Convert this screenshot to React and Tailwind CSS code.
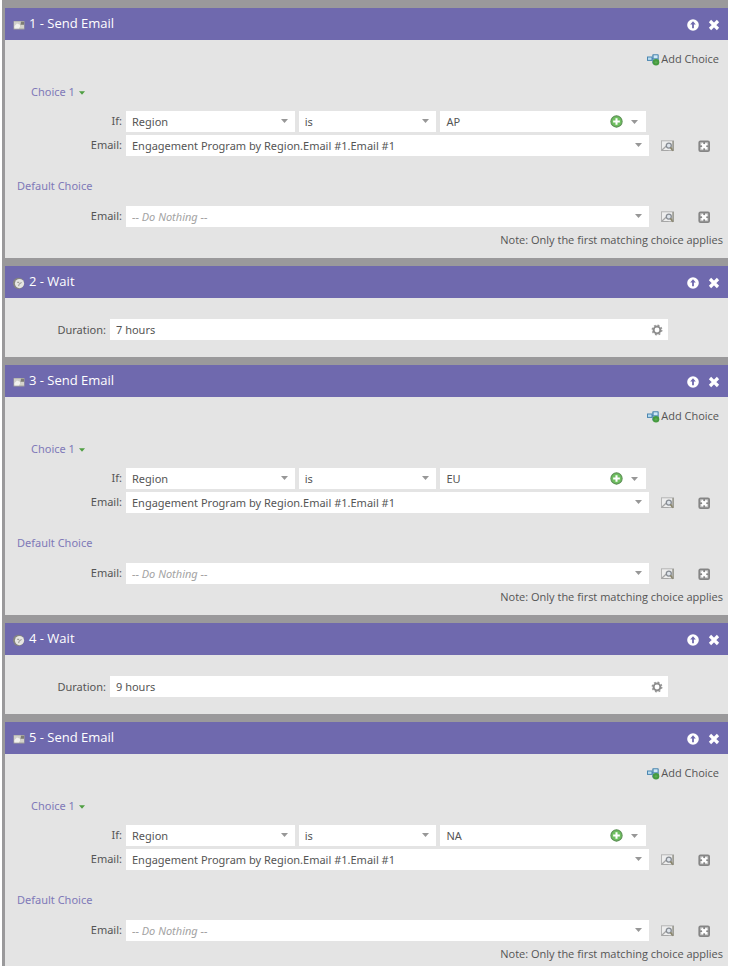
import React, { useId, useState } from "react";

const flow = [
  { type: "email", title: "1 - Send Email", region: "AP" },
  { type: "wait", title: "2 - Wait", duration: "7 hours" },
  { type: "email", title: "3 - Send Email", region: "EU" },
  { type: "wait", title: "4 - Wait", duration: "9 hours" },
  { type: "email", title: "5 - Send Email", region: "NA" },
];

const MailIcon = () => (
  <svg className="w-3 h-3 shrink-0" viewBox="0 0 12 12" aria-hidden="true">
    <rect x="0.5" y="2" width="11" height="8.5" rx="0.5" fill="#a3a29c" />
    <path d="M1 2.5h7L6 9.5H1z" fill="#d0cfca" />
    <path d="M1.5 7l2.5-2.5 3.5 1.5-1 3.5h-5z" fill="#f2f2ee" />
    <path d="M8 3h3v2.5H8z" fill="#7d7c74" />
    <path d="M7.5 6h3.5v3.5H6.5z" fill="#d4d3cb" />
  </svg>
);

const ClockIcon = () => (
  <svg className="w-3 h-3 shrink-0" viewBox="0 0 12 12" aria-hidden="true">
    <circle cx="5.6" cy="6.3" r="5.6" fill="#85857f" />
    <circle cx="6.5" cy="6.6" r="4.6" fill="#e6e6e2" />
    <path d="M6 7.2l2.6-1.8M6 7.4l-.4 1.8M4.2 5.4h2" stroke="#a0a09a" strokeWidth="1.1" fill="none" />
  </svg>
);

const UpIcon = () => (
  <svg className="w-3 h-3" viewBox="0 0 12 12" aria-hidden="true">
    <circle cx="6" cy="6" r="5.8" fill="#fff" />
    <path d="M6 2.2L3.2 5.4h1.9v3.8h1.8V5.4h1.9z" fill="#6f69ae" />
  </svg>
);

const CloseIcon = () => (
  <svg className="w-3 h-3" viewBox="0 0 12 12" aria-hidden="true">
    <path d="M2 2l8 8M10 2l-8 8" stroke="#fff" strokeWidth="3.2" />
  </svg>
);

const AddChoiceIcon = () => (
  <svg className="w-[14px] h-[13px]" viewBox="0 0 14 13" aria-hidden="true">
    <rect x="1.5" y="4" width="4.5" height="3.4" fill="#b9dcf0" stroke="#4a86b0" />
    <path d="M6 5.7h2" stroke="#4a86b0" strokeWidth="1.2" />
    <rect x="6.3" y="1.2" width="6.4" height="9.6" rx="0.8" fill="#4a86b0" />
    <rect x="7.6" y="2.3" width="4" height="2.8" fill="#cfe8f6" />
    <path d="M7.4 6.2h4.4" stroke="#a9cfe2" />
    <circle cx="10" cy="9.3" r="3.3" fill="#459a3f" />
    <path d="M10 7.8v3M8.5 9.3h3" stroke="#62b058" strokeWidth="0.9" />
  </svg>
);

const PlusIcon = () => (
  <svg className="w-[13px] h-[13px]" viewBox="0 0 12 12" aria-hidden="true">
    <circle cx="6" cy="6" r="5.2" fill="#6fbf60" stroke="#5f9158" />
    <path d="M6 2.9v6.2M2.9 6h6.2" stroke="#fff" strokeWidth="1.9" />
  </svg>
);

const GearIcon = () => (
  <svg className="w-3 h-3" viewBox="0 0 12 12" aria-hidden="true">
    <circle cx="6" cy="6" r="4.8" fill="none" stroke="#979797" strokeWidth="1.3" strokeDasharray="1.9 1.87" />
    <circle cx="6" cy="6" r="3.4" fill="none" stroke="#8d8d8d" strokeWidth="2" />
  </svg>
);

const PreviewIcon = () => (
  <svg className="w-[13px] h-3" viewBox="0 0 13 12" aria-hidden="true">
    <rect x="0.5" y="0.8" width="12" height="9.7" fill="#ededed" stroke="#b4b4b4" />
    <path d="M0.5 10.5L5 6.2M0.5 10.5h7" stroke="#a6a6a6" strokeWidth="1.2" />
    <circle cx="7.8" cy="5.6" r="2.5" fill="#dde3ea" stroke="#868b92" strokeWidth="1.3" />
    <path d="M9.5 7.4l2.5 3.4" stroke="#8a8569" strokeWidth="1.8" />
    <path d="M12 1v9.5" stroke="#96958a" strokeWidth="1.4" />
  </svg>
);

const RemoveIcon = () => (
  <svg className="w-3 h-3" viewBox="0 0 12 12" aria-hidden="true">
    <rect x="1.3" y="1.3" width="9.8" height="9.8" rx="1.2" fill="#c9c9c9" stroke="#858585" strokeWidth="1.8" />
    <path d="M3.6 3.6l5.2 5.2M8.8 3.6L3.6 8.8" stroke="#fff" strokeWidth="2.2" />
    <path d="M6.2 2v2M6.2 8.4v2M2 6.2h2M8.4 6.2h2" stroke="#858585" strokeWidth="1.6" />
  </svg>
);

const Caret = ({ className }) => (
  <svg className={className} viewBox="0 0 7 4" aria-hidden="true">
    <path d="M0 0h7L3.5 4z" fill="currentColor" />
  </svg>
);

const SelectField = ({ id, label, value, muted }) => (
  <div className="relative h-[21px] min-w-0 flex-1">
    <select
      id={id}
      aria-label={label}
      className={
        muted
          ? "block w-full h-full appearance-none bg-white pt-px pl-[6px] pr-5 italic text-[#a3a3a3]"
          : "block w-full h-full appearance-none bg-white pt-px pl-[6px] pr-5"
      }
    >
      <option>{value}</option>
    </select>
    <Caret className="pointer-events-none absolute right-[7px] top-2 w-[7px] h-1 text-[#979797]" />
  </div>
);

const RowActions = () => (
  <div className="flex w-[79px] shrink-0 items-center pl-3">
    <button type="button" aria-label="Preview email">
      <PreviewIcon />
    </button>
    <button type="button" aria-label="Remove" className="ml-6">
      <RemoveIcon />
    </button>
  </div>
);

const EmailRow = ({ value, muted }) => {
  const id = useId();
  return (
    <div className="flex">
      <label htmlFor={id} className="w-[121px] shrink-0 pr-1 text-right leading-5">
        Email:
      </label>
      <SelectField id={id} value={value} muted={muted} />
      <RowActions />
    </div>
  );
};

const SendEmail = ({ region }) => {
  const id = useId();
  const [value, setValue] = useState(region);

  return (
    <div className="pt-[9px]">
      <div className="flex h-5 justify-end pr-[9px] font-['Open_Sans',sans-serif]">
        <button type="button" className="flex items-center gap-px">
          <AddChoiceIcon />
          <span>Add Choice</span>
        </button>
      </div>

      <div className="mt-[13px] flex h-5 pl-[26px]">
        <button type="button" className="flex items-center gap-1 text-[#7f79b8]">
          <span>Choice 1</span>
          <Caret className="mt-px w-[6px] h-1 text-[#4f9f42]" />
        </button>
      </div>

      <div className="mt-[9px] flex">
        <label htmlFor={id} className="w-[121px] shrink-0 pr-1 text-right leading-5">
          If:
        </label>
        <div className="mr-[82px] grid flex-1 grid-cols-[169fr_138fr_206fr] gap-1">
          <SelectField id={id} value="Region" />
          <SelectField label="Operator" value="is" />
          <div className="flex h-[21px] min-w-0 items-center bg-white">
            <input
              aria-label="Region value"
              value={value}
              onChange={(e) => setValue(e.target.value)}
              className="h-full min-w-0 flex-1 pl-[6px] outline-none"
            />
            <button type="button" aria-label="Add value">
              <PlusIcon />
            </button>
            <button type="button" aria-label="Show values" className="mx-2">
              <Caret className="w-[7px] h-1 text-[#979797]" />
            </button>
          </div>
        </div>
      </div>

      <div className="mt-[3px]">
        <EmailRow value="Engagement Program by Region.Email #1.Email #1" />
      </div>

      <div className="mt-5 pl-3 leading-5 text-[#7f79b8]">Default Choice</div>
      <div className="mt-[10px]">
        <EmailRow value="-- Do Nothing --" muted />
      </div>
      <p className="mt-[3px] pr-[5px] text-right font-['Open_Sans',sans-serif] leading-5">
        Note: Only the first matching choice applies
      </p>
    </div>
  );
};

const Wait = ({ duration }) => {
  const id = useId();
  const [value, setValue] = useState(duration);

  return (
    <div className="flex pt-[21px] pb-[9px] pr-[60px]">
      <label htmlFor={id} className="w-[105px] shrink-0 pr-1 text-right leading-[21px]">
        Duration:
      </label>
      <div className="flex h-[21px] min-w-0 flex-1 items-center bg-white">
        <input
          id={id}
          value={value}
          onChange={(e) => setValue(e.target.value)}
          className="h-full min-w-0 flex-1 pl-[6px] outline-none"
        />
        <button type="button" aria-label="Duration settings" className="mr-[5px]">
          <GearIcon />
        </button>
      </div>
    </div>
  );
};

const Step = ({ step }) => (
  <section className="bg-[#e4e4e4] pb-2 last:pb-[2px]">
    <header className="flex h-8 items-center bg-[#6f69ae] px-2 pt-px font-['Open_Sans',sans-serif] text-white">
      {step.type === "email" ? <MailIcon /> : <ClockIcon />}
      <h2 className="ml-1 flex-1 pb-[3px] text-[13px] leading-5">{step.title}</h2>
      <button type="button" aria-label="Move up" className="mr-[9px]">
        <UpIcon />
      </button>
      <button type="button" aria-label="Delete step">
        <CloseIcon />
      </button>
    </header>
    {step.type === "email" ? <SendEmail region={step.region} /> : <Wait duration={step.duration} />}
  </section>
);

export default function App() {
  return (
    <main className="bg-white pl-[2px] pr-[3px] font-['Noto_Sans',sans-serif] text-[11px] text-[#555]">
      <div className="flex flex-col gap-2 bg-[#9a999b] pl-[3px] pt-2">
        {flow.map((step) => (
          <Step key={step.title} step={step} />
        ))}
      </div>
    </main>
  );
}
